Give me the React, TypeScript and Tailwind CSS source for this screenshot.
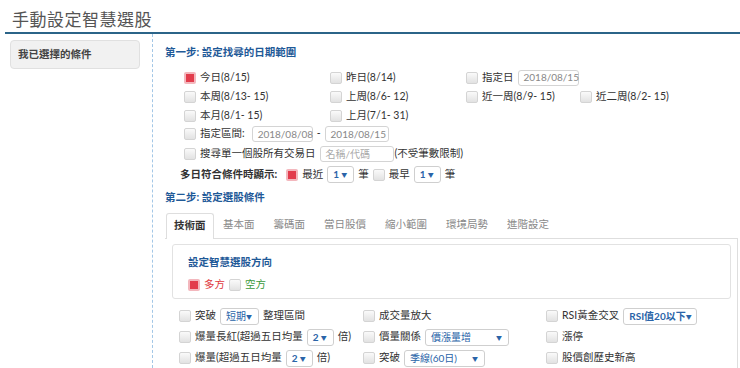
import React from 'react';

const font = { fontFamily: 'Lato, "Noto Sans CJK TC", sans-serif' };

// Small widgets
const Check = ({ checked = false }: { checked?: boolean }) => (
    <span
        className={
            checked
                ? 'inline-block w-[12px] h-[12px] rounded-[2px] border-2 border-[#f3b7bd] bg-[#e23c4c] shrink-0'
                : 'inline-block w-[12px] h-[12px] rounded-[2px] border border-[#d4d4d4] bg-gradient-to-b from-[#fafafa] to-[#e2e2e2] shrink-0'
        }
    />
);

const Select = ({ value, w, bold = false }: { value: string; w: string; bold?: boolean }) => (
    <span
        className={`inline-flex items-center justify-between whitespace-nowrap h-[17px] pl-[5px] pr-[6px] border border-[#cfcfcf] rounded-[3px] bg-white text-[#2a64a8] text-[10px] ${w} ${bold ? 'font-bold' : ''}`}
    >
        <span>{value}</span>
        <span className="text-[6px] text-[#2a64a8]">▼</span>
    </span>
);

const Input = ({ value, w, placeholder = false }: { value: string; w: string; placeholder?: boolean }) => (
    <span
        className={`inline-flex items-center h-[16px] px-[5px] border border-[#d4d4d4] rounded-[3px] bg-white text-[10px] whitespace-nowrap ${placeholder ? 'text-[#aaa]' : 'text-[#888]'} ${w}`}
    >
        {value}
    </span>
);

const Opt = ({ label, checked = false, children }: { label?: string; checked?: boolean; children?: React.ReactNode }) => (
    <div className="flex items-center gap-[4px] whitespace-nowrap">
        <Check checked={checked} />
        {label && <span>{label}</span>}
        {children}
    </div>
);

const tabs = ['技術面', '基本面', '籌碼面', '當日股價', '縮小範圍', '環境局勢', '進階設定'];

const App = () => {
    return (
        <div className="w-[740px] h-[368px] overflow-hidden bg-white text-[10.5px] text-[#333]" style={font}>
            {/* Title */}
            <div className="ml-[5px] h-[34px] border-b-2 border-[#2b6488] flex items-end pb-[4px] pl-[7px]">
                <h1 className="text-[17px] text-[#555] tracking-[0.5px] leading-none">手動設定智慧選股</h1>
            </div>

            <div className="flex h-[334px]">
                {/* Sidebar */}
                <div className="w-[152px] pl-[10px] pt-[6px]">
                    <div className="w-[130px] h-[29px] rounded-[4px] border border-[#e0e0e0] bg-[#f1f1f1] flex items-center pl-[7px] font-bold text-[#444]">
                        我已選擇的條件
                    </div>
                </div>

                {/* Main */}
                <div className="flex-1 border-l border-dashed border-[#a3c7e6] pl-[12px] pt-[11px]">
                    <div className="font-bold text-[#1f5a98]">第一步: 設定找尋的日期範圍</div>

                    <div className="pl-[19px] mt-[7px] flex flex-col">
                        <div className="grid grid-cols-[146px_136px_114px_1fr] items-center h-[20px]">
                            <Opt label="今日(8/15)" checked />
                            <Opt label="昨日(8/14)" />
                            <Opt label="指定日">
                                <Input value="2018/08/15" w="w-[61px]" />
                            </Opt>
                            <div />
                        </div>
                        <div className="grid grid-cols-[146px_136px_114px_1fr] items-center h-[19px]">
                            <Opt label="本周(8/13- 15)" />
                            <Opt label="上周(8/6- 12)" />
                            <Opt label="近一周(8/9- 15)" />
                            <Opt label="近二周(8/2- 15)" />
                        </div>
                        <div className="grid grid-cols-[146px_136px_114px_1fr] items-center h-[18px]">
                            <Opt label="本月(8/1- 15)" />
                            <Opt label="上月(7/1- 31)" />
                        </div>
                        <div className="flex items-center h-[19px]">
                            <Opt label="指定區間:">
                                <span className="ml-[3px]">
                                    <Input value="2018/08/08" w="w-[61px]" />
                                </span>
                                <span>-</span>
                                <Input value="2018/08/15" w="w-[64px]" />
                            </Opt>
                        </div>
                        <div className="flex items-center h-[21px]">
                            <Opt label="搜尋單一個股所有交易日">
                                <Input value="名稱/代碼" w="w-[74px]" placeholder />
                                <span className="-ml-[3px]">(不受筆數限制)</span>
                            </Opt>
                        </div>
                    </div>

                    <div className="pl-[15px] flex items-center gap-[4px] h-[20px]">
                        <span className="font-bold mr-[5px]">多日符合條件時顯示:</span>
                        <Check checked />
                        <span>最近</span>
                        <Select value="1" w="w-[27px]" bold />
                        <span>筆</span>
                        <Check />
                        <span>最早</span>
                        <Select value="1" w="w-[27px]" bold />
                        <span>筆</span>
                    </div>

                    <div className="font-bold text-[#1f5a98] mt-[5px]">第二步: 設定選股條件</div>

                    {/* Tabs */}
                    <div className="mt-[7px] pl-px flex items-end h-[26px] border-b border-[#dedede] mr-[2px]">
                        {tabs.map((t, i) =>
                            i === 0 ? (
                                <div
                                    key={t}
                                    className="h-[26px] px-[7px] flex items-center font-bold text-[#333] border border-b-0 border-[#dedede] rounded-t-[3px] bg-white -mb-px"
                                >
                                    {t}
                                </div>
                            ) : (
                                <div key={t} className="h-[25px] px-[9.5px] flex items-center text-[#8a8a8a]">
                                    {t}
                                </div>
                            )
                        )}
                    </div>

                    <div className="mr-[2px] border-r border-[#dedede] pt-[5px] pl-[7px] pr-[6px]">
                        <div className="h-[55px] border border-[#e2e2e2] rounded-[3px] pl-[15px] pt-[10px]">
                            <div className="font-bold text-[#1f5a98]">設定智慧選股方向</div>
                            <div className="flex items-center gap-[4px] mt-[7px]">
                                <Check checked />
                                <span className="text-[#e0393e]">多方</span>
                                <Check />
                                <span className="text-[#3c9a3c]">空方</span>
                            </div>
                        </div>

                        <div className="pl-[7px] mt-[7px] flex flex-col">
                            <div className="grid grid-cols-[184px_183px_1fr] items-center h-[21px]">
                                <Opt label="突破">
                                    <Select value="短期" w="w-[39px]" />
                                    <span>整理區間</span>
                                </Opt>
                                <Opt label="成交量放大" />
                                <Opt label="RSI黃金交叉">
                                    <Select value="RSI值20以下" w="w-[74px]" bold />
                                </Opt>
                            </div>
                            <div className="grid grid-cols-[184px_183px_1fr] items-center h-[21px]">
                                <Opt label="爆量長紅(超過五日均量">
                                    <Select value="2" w="w-[27px]" bold />
                                    <span>倍)</span>
                                </Opt>
                                <Opt label="價量關係">
                                    <Select value="價漲量增" w="w-[84px]" />
                                </Opt>
                                <Opt label="漲停" />
                            </div>
                            <div className="grid grid-cols-[184px_183px_1fr] items-center h-[21px]">
                                <Opt label="爆量(超過五日均量">
                                    <Select value="2" w="w-[27px]" bold />
                                    <span>倍)</span>
                                </Opt>
                                <Opt label="突破">
                                    <Select value="季線(60日)" w="w-[81px]" />
                                </Opt>
                                <Opt label="股價創歷史新高" />
                            </div>
                        </div>
                    </div>
                </div>
            </div>
        </div>
    );
};

export default App;
